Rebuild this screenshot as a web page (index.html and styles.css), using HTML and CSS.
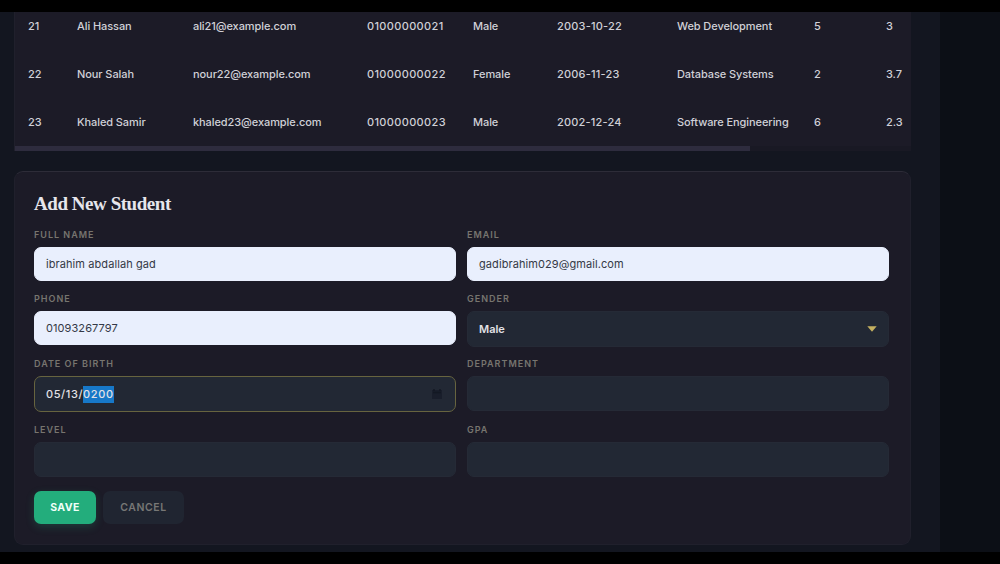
FILE: index.html
```
<!DOCTYPE html>
<html lang="en">
<head>
  <meta charset="UTF-8" />
  <meta name="viewport" content="width=device-width, initial-scale=1" />
  <title>Students</title>
  <link rel="stylesheet" href="styles.css">
</head>
<body>
  <div class="page">
    <main class="panel">
      <div class="table-card">
        <table>
          <colgroup>
            <col class="c-id"><col class="c-name"><col class="c-email"><col class="c-phone"><col class="c-gender"><col class="c-dob"><col class="c-dept"><col class="c-level"><col class="c-gpa">
          </colgroup>
          <tr>
            <td>21</td><td>Ali Hassan</td><td>ali21@example.com</td><td class="phone">01000000021</td><td>Male</td><td class="date">2003-10-22</td><td>Web Development</td><td>5</td><td>3</td>
          </tr>
          <tr>
            <td>22</td><td>Nour Salah</td><td>nour22@example.com</td><td class="phone">01000000022</td><td>Female</td><td class="date">2006-11-23</td><td>Database Systems</td><td>2</td><td>3.7</td>
          </tr>
          <tr>
            <td>23</td><td>Khaled Samir</td><td>khaled23@example.com</td><td class="phone">01000000023</td><td>Male</td><td class="date">2002-12-24</td><td>Software Engineering</td><td>6</td><td>2.3</td>
          </tr>
        </table>
        <div class="scrollbar"><div class="thumb"></div></div>
      </div>

      <section class="form-card">
        <h2>Add New Student</h2>
        <div class="form-grid">
          <div class="field">
            <label>Full Name</label>
            <div class="input filled">ibrahim abdallah gad</div>
          </div>
          <div class="field">
            <label>Email</label>
            <div class="input filled">gadibrahim029@gmail.com</div>
          </div>
          <div class="field">
            <label>Phone</label>
            <div class="input filled">01093267797</div>
          </div>
          <div class="field">
            <label>Gender</label>
            <div class="input select">
              <span>Male</span>
              <svg width="10" height="6" viewBox="0 0 10 6"><path d="M0.3 0.3h9.4L5 5.7z" fill="#c4b060"/></svg>
            </div>
          </div>
          <div class="field">
            <label>Date of Birth</label>
            <div class="input focus">
              <span>05/13/<span class="selected">0200</span></span>
              <svg width="12" height="12" viewBox="0 0 12 12"><path d="M1 2h10v9H1z" fill="#191e2b"/><path d="M3 1v2M9 1v2M2 4.5h8" stroke="#131823" stroke-width="1.4"/></svg>
            </div>
          </div>
          <div class="field">
            <label>Department</label>
            <div class="input"></div>
          </div>
          <div class="field">
            <label>Level</label>
            <div class="input"></div>
          </div>
          <div class="field">
            <label>GPA</label>
            <div class="input"></div>
          </div>
        </div>
        <div class="actions">
          <button class="btn save">Save</button>
          <button class="btn cancel">Cancel</button>
        </div>
      </section>
    </main>
  </div>
</body>
</html>
```
FILE: styles.css
```
* {
  box-sizing: border-box;
}
body {
  margin: 0;
  height: 564px;
  padding: 12px 0;
  background: #000;
  color: #d0d0d7;
  font-family: 'Inter', 'Liberation Sans', sans-serif;
  font-size: 11px;
  overflow: hidden;
}
.page {
  height: 540px;
  background: #0c0f16;
  overflow: hidden;
}
.panel {
  width: 940px;
  height: 540px;
  padding: 0 29px 0 14px;
  background: #131620;
}
.table-card {
  width: 897px;
  height: 139px;
  background: #1c1b27;
  border-left: 1px solid #20202c;
}
table {
  width: 896px;
  table-layout: fixed;
  border-collapse: collapse;
}
td {
  padding: 0;
  height: 48px;
  white-space: nowrap;
  font-weight: 500;
  letter-spacing: -0.08px;
}
tr:first-child td {
  height: 38px;
  padding-bottom: 10px;
}
td:first-child {
  padding-left: 13px;
}
.c-id { width: 62px; }
.c-name { width: 116px; }
.c-email { width: 174px; }
.c-phone { width: 106px; }
.c-gender { width: 84px; }
.c-dob { width: 120px; }
.c-dept { width: 137px; }
.c-level { width: 72px; }
.phone {
  letter-spacing: 0.35px;
}
.date {
  letter-spacing: 0.2px;
}
.scrollbar {
  height: 5px;
  background: #191924;
}
.thumb {
  width: 735px;
  height: 5px;
  background: #2e2c3e;
}
.form-card {
  width: 897px;
  height: 374px;
  margin-top: 20px;
  padding: 19px 21px 0 19px;
  background: #1c1b27;
  border: 1px solid #20202c;
  border-top-color: #2d2c38;
  border-radius: 9px;
}
h2 {
  margin: 0;
  height: 39px;
  line-height: 25px;
  font-family: 'Liberation Serif', serif;
  font-size: 19px;
  font-weight: bold;
  letter-spacing: -0.45px;
  color: #e6e6ec;
}
.form-grid {
  display: grid;
  grid-template-columns: 422px 422px;
  grid-template-rows: 52px 53px 54px 52px;
  gap: 12px 11px;
}
label {
  display: block;
  height: 17px;
  line-height: 10px;
  font-size: 9px;
  font-weight: 600;
  letter-spacing: 1px;
  text-transform: uppercase;
  color: #77756f;
}
.input {
  display: flex;
  align-items: center;
  justify-content: space-between;
  height: 35px;
  padding: 0 12px;
  background: #222834;
  border: 1px solid #252a36;
  border-radius: 7px;
}
.filled {
  height: 34px;
  background: #e9effd;
  border-color: #e9effd;
  padding: 0 11px;
  color: #343946;
  letter-spacing: 0.08px;
}
.select {
  height: 36px;
  padding: 0 11px;
  font-weight: 600;
  color: #e2e2e6;
}
.focus {
  height: 36px;
  padding-left: 11px;
  border-color: #67643f;
  font-weight: 500;
  letter-spacing: 0.6px;
  color: #e2e2e6;
}
.selected {
  display: inline-block;
  height: 17px;
  line-height: 17px;
  background: #1778c8;
}
.actions {
  display: flex;
  gap: 7px;
  margin-top: 14px;
}
.btn {
  height: 33px;
  padding: 0;
  border: none;
  border-radius: 7px;
  font-family: inherit;
  font-size: 10.5px;
  font-weight: 600;
  letter-spacing: 0.6px;
  text-transform: uppercase;
}
.save {
  width: 62px;
  background: #23ad7c;
  color: #f0fff8;
  font-weight: 700;
  letter-spacing: 0.4px;
  box-shadow: 0 3px 8px rgba(35, 173, 124, 0.22);
}
.cancel {
  width: 81px;
  background: #202531;
  color: #777776;
}
```
